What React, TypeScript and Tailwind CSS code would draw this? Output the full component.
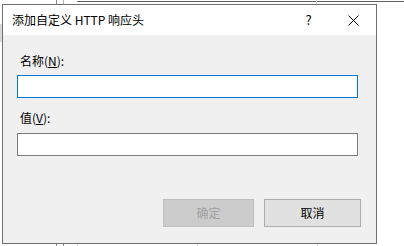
import React from "react";

export default function App() {
  return (
    <div
      className="relative w-[404px] h-[246px] bg-white overflow-hidden"
      style={{ fontFamily: '"Noto Sans CJK SC", "Noto Sans", sans-serif' }}
    >
      {/* background window remnants */}
      <div className="absolute left-[77px] top-[1px] right-0 h-[1px] bg-[#5f5d70]" />
      <div className="absolute left-[56px] top-0 w-[1px] h-[4px] bg-[#8a8a8a]" />
      <div className="absolute left-[63px] top-0 w-[1px] h-[4px] bg-[#b0b0b0]" />
      <div className="absolute left-[316px] top-0 w-[1px] h-[4px] bg-[#d8d8d8]" />
      <div className="absolute left-0 top-[24px] w-[2px] h-[18px] bg-[#d9d9d9]" />
      <div className="absolute left-[56px] top-[244px] w-[1px] h-[2px] bg-[#8a8a8a]" />
      <div className="absolute left-[63px] top-[244px] w-[1px] h-[2px] bg-[#8a8a8a]" />
      <div className="absolute left-[77px] top-[244px] w-[1px] h-[2px] bg-[#d0d0d0]" />
      <div className="absolute left-[197px] top-[244px] w-[1px] h-[2px] bg-[#d0d0d0]" />
      <div className="absolute left-[317px] top-[244px] w-[1px] h-[2px] bg-[#d0d0d0]" />

      {/* dialog window */}
      <div className="absolute left-[2px] top-[4px] w-[375px] h-[240px] border border-[#707070] flex flex-col bg-[#f0f0f0]">
        {/* title bar */}
        <div className="h-[30px] bg-white flex items-center shrink-0">
          <div className="pl-[9px] text-[12px] leading-[16px] text-black">
            添加自定义 HTTP 响应头
          </div>
          <div className="ml-auto flex h-full">
            <div className="w-[45px] h-full flex items-center justify-center text-[13px] text-black">
              ?
            </div>
            <div className="w-[45px] h-full flex items-center justify-center">
              <svg width="11" height="11" viewBox="0 0 11 11">
                <path d="M0.5 0.5 L10.5 10.5 M10.5 0.5 L0.5 10.5" stroke="#000" strokeWidth="1" fill="none" />
              </svg>
            </div>
          </div>
        </div>

        {/* body */}
        <div className="flex-1 flex flex-col pl-[14px] pr-[18px]">
          <div className="mt-[18px] ml-[3px] text-[12px] leading-[16px] text-black">
            名称(<u>N</u>):
          </div>
          <div className="mt-[6px] h-[23px] border border-[#0078d7] bg-white" />
          <div className="mt-[12px] ml-[3px] text-[12px] leading-[16px] text-black">
            值(<u>V</u>):
          </div>
          <div className="mt-[7px] h-[23px] border border-[#7a7a7a] bg-white" />
          <div className="mt-[43px] flex justify-end gap-[10px] -mr-[3px]">
            <div className="w-[91px] h-[28px] border border-[#bfbfbf] bg-[#cccccc] flex items-center justify-center text-[12px] text-[#a0a0a0]">
              确定
            </div>
            <div className="w-[97px] h-[28px] border border-[#adadad] bg-[#e1e1e1] flex items-center justify-center text-[12px] text-black">
              取消
            </div>
          </div>
        </div>
      </div>
    </div>
  );
}
